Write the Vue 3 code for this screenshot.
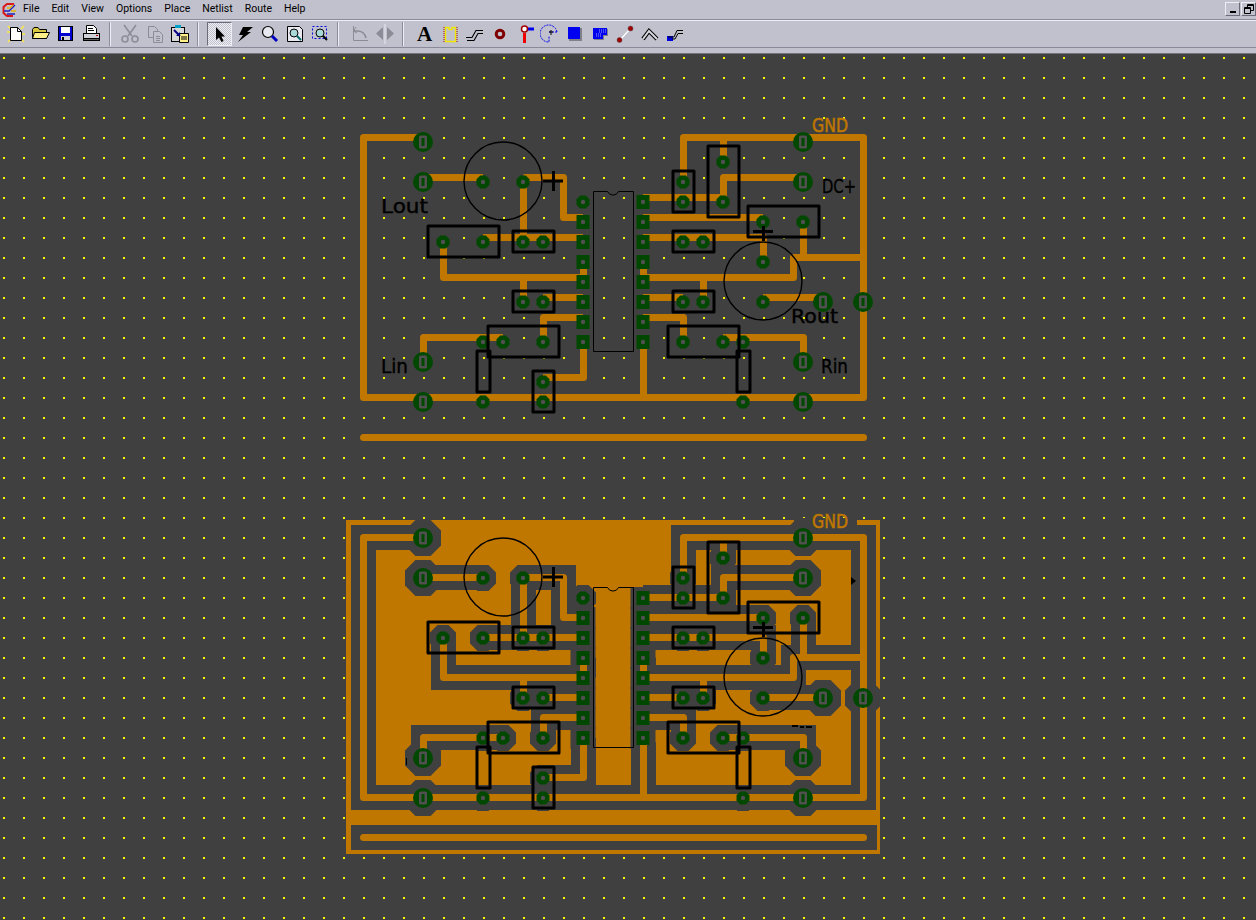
<script setup>
const menus = ['File', 'Edit', 'View', 'Options', 'Place', 'Netlist', 'Route', 'Help']

// all board coordinates are page pixels of the upper board
const tracks = [
  'M683.5,178 V137.5 H863.5 V397.5 H363.5 V137.5 H423',
  'M723.5,137.5 V158',
  'M423,177.5 H483',
  'M523.5,177.5 H563.5 V217.5 H583',
  'M523.5,177.5 V237.5',
  'M483,237.5 H583',
  'M443.5,242 V277.5 H583',
  'M583.5,257.5 V277.5',
  'M523.5,277.5 V297.5',
  'M543,297.5 H583',
  'M583,317.5 H543.5 V338',
  'M503,337.5 H423.5 V358',
  'M583.5,338 V377.5 H543',
  'M643,197.5 H723.5 V177.5 H803',
  'M643,217.5 H763',
  'M643,237.5 H763.5 V258',
  'M803.5,222 V257.5',
  'M643,277.5 H793.5 V257.5 H863.5',
  'M643.5,257.5 V277.5',
  'M703.5,277.5 V297',
  'M643,297.5 H683',
  'M763,297.5 H823',
  'M643,317.5 H683.5 V338',
  'M723,337.5 H803.5 V358',
  'M643.5,342 V397.5'
]
const strip = 'M363.5,437.5 H863.5'

const bigPads = [
  [423, 142], [423, 182], [423, 362], [423, 402],
  [803, 142], [803, 182], [803, 362], [803, 402],
  [823, 302], [863, 302]
]
const vias = [
  [483, 182], [523, 182], [443, 242], [483, 242], [523, 242], [543, 242],
  [523, 302], [543, 302], [483, 342], [503, 342], [543, 342], [483, 402],
  [543, 382], [543, 402], [583, 202],
  [683, 182], [683, 202], [723, 162], [723, 202], [763, 222], [803, 222],
  [683, 242], [703, 242], [763, 262], [683, 302], [703, 302], [763, 302],
  [683, 342], [723, 342], [743, 342], [743, 402]
]
const icPads = [
  [583, 222], [583, 242], [583, 262], [583, 282], [583, 302], [583, 322], [583, 342],
  [643, 202], [643, 222], [643, 242], [643, 262], [643, 282], [643, 302], [643, 322], [643, 342]
]
const silkRects = [
  [428, 226, 71, 31], [513, 231, 41, 21], [513, 291, 41, 21], [488, 326, 71, 31],
  [477, 351, 13, 41], [533, 371, 21, 41], [673, 171, 21, 41], [708, 146, 31, 71],
  [748, 206, 71, 31], [673, 231, 41, 21], [673, 291, 41, 21], [668, 326, 71, 31],
  [737, 351, 13, 41]
]
const boards = [0, 396]

// top board labels, x / baseline / width
const labels = [
  { text: 'Lout', x: 381, y: 213, w: 47 },
  { text: 'Lin', x: 381, y: 373, w: 27 },
  { text: 'DC+', x: 822, y: 193, w: 34 },
  { text: 'Rout', x: 791, y: 323, w: 47 },
  { text: 'Rin', x: 821, y: 373, w: 27 }
]

const octagon = (x, y, r) => {
  const k = r * 0.42
  return [
    [x - k, y - r], [x + k, y - r], [x + r, y - k], [x + r, y + k],
    [x + k, y + r], [x - k, y + r], [x - r, y + k], [x - r, y - k]
  ].map((p) => p.join(',')).join(' ')
}
</script>

<template>
  <div class="app">
    <div class="menubar">
      <svg class="logo" width="15" height="16" viewBox="0 0 15 16" fill="none">
        <path d="M12 2 H5 L1.5 5 V11 L5 14 H11" stroke="#d81818" stroke-width="2" />
        <path d="M2 9 H7 L13 3 M5 12 H13" stroke="#2020c0" stroke-width="1.4" />
        <path d="M5 6 H8 L11 3 M9 9 H14" stroke="#e8b000" stroke-width="1.4" />
      </svg>
      <span v-for="m in menus" :key="m" class="menu-item">{{ m }}</span>
      <div class="win-buttons">
        <div class="win-btn"><span class="min-glyph"></span></div>
        <div class="win-btn">
          <svg width="10" height="10" viewBox="0 0 10 10" fill="none" stroke="#000">
            <path d="M3.5 3 V.5 H9.5 V6.5 H7 M3.5 1.5 H9.5" />
            <path d="M.5 3.5 H6.5 V9.5 H.5 Z M.5 4.5 H6.5" />
          </svg>
        </div>
      </div>
    </div>

    <div class="toolbar">
      <div class="tool">
        <svg class="ico" viewBox="0 0 20 20">
          <path d="M2 2 L5 5 M18 2 L15 5 M2 18 L5 15 M18 18 L15 15 M16 10 H19 M1 8 H4" stroke="#ffe840" stroke-width="1.5" />
          <path d="M4.5 3.5 H11.5 L15.5 7.5 V16.5 H4.5 Z" fill="#fff" stroke="#000" />
          <path d="M11.5 3.5 V7.5 H15.5" fill="none" stroke="#000" />
        </svg>
      </div>
      <div class="tool">
        <svg class="ico" viewBox="0 0 20 20">
          <path d="M1.5 5.5 L3 3.5 H7 L8.5 5.5 H15.5 V14.5 H1.5 Z" fill="#d8c840" stroke="#000" />
          <path d="M3.5 8.5 H18.5 L15.5 14.5 H1.5 Z" fill="#fff088" stroke="#000" />
        </svg>
      </div>
      <div class="tool">
        <svg class="ico" viewBox="0 0 20 20">
          <rect x="2.5" y="2.5" width="14" height="14" fill="#0000d0" stroke="#000" />
          <rect x="5" y="3" width="9" height="6" fill="#fff" />
          <rect x="5" y="12" width="9" height="4" fill="#d0d0d8" />
          <rect x="6" y="13" width="2" height="3" fill="#000" />
        </svg>
      </div>
      <div class="tool">
        <svg class="ico" viewBox="0 0 20 20">
          <path d="M5.5 1.5 H12.5 L15.5 4.5 V9.5 H5.5 Z" fill="#fff" stroke="#000" />
          <path d="M7 4.5 H12 M7 6.5 H13" stroke="#000" />
          <rect x="2.5" y="9.5" width="16" height="5" fill="#d0d0d8" stroke="#000" />
          <rect x="2.5" y="14.5" width="16" height="2" fill="#606060" stroke="#000" />
          <rect x="15" y="11" width="2" height="1" fill="#c00000" />
        </svg>
      </div>
      <div class="tool-sep"></div>
      <div class="tool">
        <svg class="ico" viewBox="0 0 20 20" fill="none" stroke="#8c8c96">
          <path d="M4 1 L12 12 M16 1 L8 12" stroke-width="1.6" />
          <circle cx="5" cy="15" r="3" stroke-width="1.6" />
          <circle cx="15" cy="15" r="3" stroke-width="1.6" />
        </svg>
      </div>
      <div class="tool">
        <svg class="ico" viewBox="0 0 20 20" fill="#c1c1cd" stroke="#8c8c96">
          <path d="M3.5 2.5 H9.5 L12.5 5.5 V13.5 H3.5 Z" />
          <path d="M8.5 7.5 H14.5 L17.5 10.5 V18.5 H8.5 Z" />
          <path d="M11 12.5 H15 M11 14.5 H15 M11 16.5 H15" />
        </svg>
      </div>
      <div class="tool">
        <svg class="ico" viewBox="0 0 20 20">
          <rect x="1.5" y="3.5" width="13" height="14" fill="#d8d8d8" stroke="#000" />
          <rect x="5" y="1" width="6" height="3" fill="#00a0c8" />
          <path d="M9.5 9.5 H18.5 V18.5 H9.5 Z" fill="#fff088" stroke="#000" />
          <path d="M4 6 L10 12" stroke="#000080" stroke-width="2" />
          <path d="M6 12 H10 V8 Z" fill="#000080" />
          <path d="M11 13 H17 M11 15 H17" stroke="#000" />
        </svg>
      </div>
      <div class="tool-sep"></div>
      <div class="tool selected">
        <svg class="ico" viewBox="0 0 20 20">
          <path d="M7 3 V16 L10 13.5 L12.5 18 L14.5 17 L12.5 12.5 H16 Z" fill="#000" />
        </svg>
      </div>
      <div class="tool">
        <svg class="ico" viewBox="0 0 20 20">
          <path d="M8 3 H18 L12 8 H16 L3 18 L8 11 H4 Z" fill="#000" />
        </svg>
      </div>
      <div class="tool">
        <svg class="ico" viewBox="0 0 20 20">
          <circle cx="8" cy="8" r="5.5" fill="#e8e8f0" stroke="#000" stroke-width="1.2" />
          <path d="M12 12 L17 17" stroke="#0000c0" stroke-width="3" />
        </svg>
      </div>
      <div class="tool">
        <svg class="ico" viewBox="0 0 20 20">
          <path d="M2.5 2.5 H14.5 L17.5 5.5 V17.5 H2.5 Z" fill="#e8e8f0" stroke="#000" />
          <circle cx="9" cy="9" r="4" fill="#a8d8d8" stroke="#000" />
          <path d="M12 12 L16 16" stroke="#006868" stroke-width="2" />
        </svg>
      </div>
      <div class="tool">
        <svg class="ico" viewBox="0 0 20 20">
          <rect x="2.5" y="2.5" width="14" height="12" fill="none" stroke="#0000e0" stroke-dasharray="2 2" />
          <circle cx="10" cy="9" r="4" fill="#a8d8d8" stroke="#000" />
          <path d="M13 12 L17 16" stroke="#000" stroke-width="2" />
        </svg>
      </div>
      <div class="tool-sep wide"></div>
      <div class="tool">
        <svg class="ico" viewBox="0 0 20 20" fill="none" stroke="#8c8c96">
          <path d="M3.5 2 V16.5 H18" />
          <path d="M3.5 7 H8 A9 9 0 0 1 16 14" stroke-width="1.6" />
          <path d="M6 3 L3.5 7 L7 9" />
        </svg>
      </div>
      <div class="tool">
        <svg class="ico" viewBox="0 0 20 20" fill="#8c8c96">
          <path d="M8 3 V16 L1 9.5 Z M12 3 V16 L19 9.5 Z" />
          <path d="M10 0 V20" stroke="#e8e8f0" />
        </svg>
      </div>
      <div class="tool-sep wide"></div>
      <div class="tool"><span class="letter">A</span></div>
      <div class="tool">
        <svg class="ico" viewBox="0 0 20 20" fill="none">
          <path d="M5.5 3.5 H9 V5.5 H12 V3.5 H15.5 V17.5 H5.5 Z" stroke="#f0e800" stroke-width="1.4" fill="#c1c1cd" />
          <path d="M4 3 V18 M17 3 V18" stroke="#a00000" stroke-dasharray="1 1" />
        </svg>
      </div>
      <div class="tool">
        <svg class="ico" viewBox="0 0 20 20" fill="none" stroke="#000">
          <path d="M1 13.5 H7 L11 6.5 H18 M2 16.5 H9 L13 9.5 H18" stroke-width="1.1" />
        </svg>
      </div>
      <div class="tool">
        <svg class="ico" viewBox="0 0 20 20">
          <circle cx="10" cy="10" r="3.8" fill="none" stroke="#800000" stroke-width="3" />
        </svg>
      </div>
      <div class="tool">
        <svg class="ico" viewBox="0 0 20 20">
          <path d="M9.5 9 V19" stroke="#f00000" stroke-width="3" />
          <path d="M12 5 H19" stroke="#0000f0" stroke-width="3" />
          <circle cx="9.5" cy="5" r="3" fill="#fff" stroke="#a00000" stroke-width="1.5" />
        </svg>
      </div>
      <div class="tool">
        <svg class="ico" viewBox="0 0 20 20" fill="none">
          <path d="M17 8 A8.5 8.5 0 1 0 9 18 V12" stroke="#0000f0" stroke-dasharray="2 1" />
          <path d="M17 8 H9" stroke="#0000f0" stroke-dasharray="2 1" />
          <path d="M9 8 H13 M11 6 V11" stroke="#000" />
        </svg>
      </div>
      <div class="tool">
        <svg class="ico" viewBox="0 0 20 20">
          <rect x="4" y="4" width="13" height="13" fill="#808088" />
          <rect x="3" y="3" width="12" height="12" fill="#0000f0" />
        </svg>
      </div>
      <div class="tool">
        <svg class="ico" viewBox="0 0 20 20">
          <path d="M3 4 H17 V11 H13 V15 H3 Z" fill="#808088" transform="translate(1,1)" />
          <path d="M3 4 H17 V11 H13 V15 H3 Z" fill="#0000f0" />
          <path d="M9 6 H16 M9 8 H16 M6 10 H12 M6 12 H12" stroke="#a0a0ff" stroke-dasharray="1 1" />
        </svg>
      </div>
      <div class="tool">
        <svg class="ico" viewBox="0 0 20 20">
          <path d="M5 16 L15 5" stroke="#fff" stroke-width="1.2" />
          <circle cx="15.5" cy="4.5" r="2.5" fill="#a00000" stroke="#505050" stroke-width=".5" />
          <circle cx="4.5" cy="16" r="2.5" fill="#a00000" stroke="#505050" stroke-width=".5" />
        </svg>
      </div>
      <div class="tool">
        <svg class="ico" viewBox="0 0 20 20" fill="none">
          <path d="M3 15 L9 7 L17 15" stroke="#000" stroke-width="4" />
          <path d="M3 15 L9 7 L17 15" stroke="#d8d8e0" stroke-width="2" />
        </svg>
      </div>
      <div class="tool">
        <svg class="ico" viewBox="0 0 20 20" fill="none">
          <rect x="2" y="12" width="6" height="5" fill="#0000e0" />
          <path d="M3 13 H9 L12 6.5 H18 M7 15 H10 L13 9.5 H18" stroke="#000" />
        </svg>
      </div>
    </div>
    <div class="status-strip"></div>

    <svg class="canvas" width="1256" height="866" viewBox="0 54 1256 866">
      <defs>
        <pattern id="grid" x="3" y="57" width="20" height="20" patternUnits="userSpaceOnUse">
          <rect width="2" height="2" fill="#ffff00" />
        </pattern>
      </defs>
      <rect x="0" y="54" width="1256" height="866" fill="url(#grid)" />

      <!-- lower board: copper pour with clearances -->
      <rect x="346" y="520" width="534" height="334" class="copper" />
      <g transform="translate(0,400)">
        <path v-for="t in tracks" :key="t" :d="t" class="clearance" />
      </g>
      <rect x="351" y="825" width="526" height="25" class="cut" />
      <g transform="translate(0,396)">
        <polygon v-for="p in bigPads" :key="p.join()" :points="octagon(p[0], p[1], 18)" class="cut" />
        <polygon v-for="p in vias" :key="p.join()" :points="octagon(p[0], p[1], 13)" class="cut" />
        <rect v-for="p in icPads" :key="p.join()" :x="p[0] - 12.5" :y="p[1] - 11" width="25" height="22" class="cut" />
      </g>
      <rect x="794" y="518" width="63" height="12" class="cut" />
      <!-- bits of the cut-off labels that still show through the pour -->
      <path d="M851 577 L856 581 L851 585 Z M406 758 h1 v7 h-1 Z M792 725 h6 v2 h-6 Z M800 726 h4 v2 h-4 Z M806 726 h6 v2 h-6 Z" fill="#000" />

      <g v-for="(dy, i) in boards" :key="dy">
        <g :transform="`translate(0,${i ? 400 : 0})`">
          <path v-for="t in tracks" :key="t" :d="t" class="track" />
          <path :d="strip" class="track cap" />
        </g>
        <g :transform="`translate(0,${dy})`">
          <g v-for="p in bigPads" :key="p.join()">
            <circle :cx="p[0]" :cy="p[1]" r="10" class="pad" />
            <rect :x="p[0] - 4" :y="p[1] - 6.5" width="8" height="13" rx="1.5" class="hole" />
            <rect :x="p[0] - 1.5" :y="p[1] - 4" width="3" height="8" class="pad" />
          </g>
          <g v-for="p in vias" :key="p.join()">
            <polygon :points="octagon(p[0], p[1], 6.5)" class="pad" />
            <circle :cx="p[0]" :cy="p[1]" r="2.2" class="hole" />
          </g>
          <g v-for="p in icPads" :key="p.join()">
            <rect :x="p[0] - 6.5" :y="p[1] - 7" width="13" height="14" class="pad" />
            <circle :cx="p[0]" :cy="p[1]" r="2.2" class="hole" />
          </g>

          <rect v-for="r in silkRects" :key="r.join()" :x="r[0]" :y="r[1]" :width="r[2]" :height="r[3]" class="silk" />
          <circle cx="503" cy="181" r="39" class="silk thin" />
          <circle cx="763" cy="281" r="39" class="silk thin" />
          <path d="M543 181 H563 M553.5 171 V191" class="silk" stroke-width="2" />
          <path d="M753 231.5 H773 M763.5 226 V241" class="silk" stroke-width="2" />
          <path d="M593.5 351.5 V191.5 H607.5 A6 6 0 0 0 618.5 191.5 H633.5 V351.5 Z" class="silk hair" />
        </g>
      </g>

      <text x="812" y="132" textLength="36" lengthAdjust="spacingAndGlyphs" class="label gnd">GND</text>
      <text x="812" y="528" textLength="36" lengthAdjust="spacingAndGlyphs" class="label gnd">GND</text>
      <text
        v-for="l in labels"
        :key="l.text"
        :x="l.x"
        :y="l.y"
        :textLength="l.w"
        lengthAdjust="spacingAndGlyphs"
        class="label"
      >{{ l.text }}</text>
    </svg>
  </div>
</template>

<style>
body {
  margin: 0;
  background: #404040;
  overflow: hidden;
}
</style>

<style scoped>
.app {
  width: 1256px;
  height: 920px;
  overflow: hidden;
  background: #c1c1cd;
  font-family: Roboto, "Liberation Sans", Arial, sans-serif;
}

.menubar {
  display: flex;
  align-items: center;
  height: 20px;
  box-sizing: border-box;
  padding-left: 2px;
  border-bottom: 1px solid #8a8a9a;
  font-size: 10.5px;
  color: #000;
}

.logo {
  flex: none;
}

.menu-item {
  padding: 0 6px 2px;
}

.win-buttons {
  display: flex;
  gap: 1px;
  margin-left: auto;
  align-self: flex-start;
  margin-top: 2px;
}

.win-btn {
  display: flex;
  align-items: center;
  justify-content: center;
  width: 15px;
  height: 14px;
  box-sizing: border-box;
  background: #c1c1cd;
  border: 1px solid;
  border-color: #eeeef4 #6a6a78 #6a6a78 #eeeef4;
}

.min-glyph {
  width: 6px;
  height: 2px;
  margin-top: 5px;
  background: #000;
}

.toolbar {
  display: flex;
  align-items: center;
  height: 28px;
  box-sizing: border-box;
  padding-left: 3.5px;
  border-top: 1px solid #eeeef4;
  border-bottom: 1px solid #8a8a9a;
}

.tool {
  display: flex;
  align-items: center;
  justify-content: center;
  flex: none;
  width: 25px;
  height: 24px;
  box-sizing: border-box;
}

.tool.selected {
  margin: 0 0.5px 0 1px;
  background-color: #dcdce2;
  background-image: repeating-conic-gradient(#c1c1cd 0 25%, #eeeef4 0 50%);
  background-size: 2px 2px;
  border: 1px solid;
  border-color: #6a6a78 #eeeef4 #eeeef4 #6a6a78;
}

.ico {
  width: 20px;
  height: 20px;
  display: block;
}

.letter {
  font-family: "Liberation Serif", serif;
  font-weight: 700;
  font-size: 21px;
  line-height: 1;
  color: #000;
}

.tool-sep {
  flex: none;
  width: 2px;
  height: 24px;
  margin: 0 6.5px 0 5px;
  background: linear-gradient(90deg, #8a8a9a 50%, #eeeef4 50%);
}

.tool-sep.wide {
  margin-right: 8px;
}

.status-strip {
  height: 6px;
  box-sizing: border-box;
  border-bottom: 1px solid #70707e;
}

.canvas {
  display: block;
  background: #404040;
}

.copper {
  fill: #bf7700;
}

.clearance {
  fill: none;
  stroke: #404040;
  stroke-width: 25;
  stroke-linejoin: miter;
}

.cut {
  fill: #404040;
}

.track {
  fill: none;
  stroke: #bf7700;
  stroke-width: 7;
  stroke-linejoin: round;
}

.track.cap {
  stroke-linecap: round;
}

.pad {
  fill: #004800;
}

.hole {
  fill: #505050;
}

.silk {
  fill: none;
  stroke: #000;
  stroke-width: 3;
  stroke-linejoin: round;
}

.silk.thin {
  stroke-width: 1.4;
}

.silk.hair {
  stroke-width: 1;
}

.label {
  font-family: "DejaVu Sans", sans-serif;
  font-size: 19px;
  fill: #000;
  stroke: #000;
  stroke-width: 0.4;
}

.label.gnd {
  fill: #bf7700;
  stroke: #bf7700;
  stroke-width: 0.6;
}
</style>
